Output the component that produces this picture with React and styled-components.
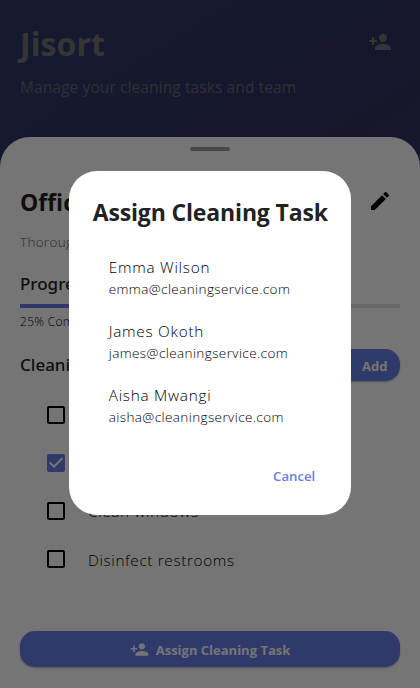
import React from "react";
import styled, { createGlobalStyle, css } from "styled-components";

const Global = createGlobalStyle`
  * { box-sizing: border-box; }
  body { margin: 0; overflow: hidden; font-family: "Open Sans", "Noto Sans", sans-serif; }
  h1, h2, h3, p, ul { margin: 0; padding: 0; }
  button { font: inherit; border: 0; margin: 0; padding: 0; background: none; }
`;

const Screen = styled.main`
  position: relative;
  height: 688px;
  width: 420px;
  overflow: hidden;
  display: flex;
  flex-direction: column;
  background: linear-gradient(rgba(0, 0, 0, 0.54), rgba(0, 0, 0, 0.54)),
    linear-gradient(148.6deg, #667eea 0%, #764ba2 100%);
`;
const Header = styled.header`
  height: 136.5px;
  flex: none;
  padding: 18px 28px 0 20px;
  color: #757575;
`;
const HeaderRow = styled.div`
  display: flex;
  height: 48px;
  align-items: center;
  justify-content: space-between;
`;
const Brand = styled.h1`
  font-size: 32px;
  line-height: 48px;
  padding-top: 3px;
  font-weight: 700;
  letter-spacing: 0.1px;
`;
const Tagline = styled.p`
  margin-top: 9px;
  font-size: 15.5px;
  line-height: 24px;
  letter-spacing: 0.1px;
  color: #69696c;
  white-space: nowrap;
`;
const Sheet = styled.section`
  flex: 1;
  display: flex;
  flex-direction: column;
  padding: 10px 20px 21px;
  border-radius: 30px 30px 0 0;
  background: #fff;
`;
const Handle = styled.div`
  width: 40px;
  height: 4px;
  border-radius: 2px;
  background: #9e9e9e;
  align-self: center;
  flex: none;
`;
const TitleRow = styled.div`
  display: flex;
  justify-content: space-between;
  align-items: center;
  height: 48px;
  margin-top: 26px;
  padding-right: 8px;
`;
const Title = styled.h2`
  font-size: 23px;
  line-height: 32px;
  padding-top: 2px;
  font-weight: 700;
  color: #222;
`;
const Description = styled.p`
  margin-top: 7.5px;
  font-size: 13.5px;
  line-height: 20px;
  font-weight: 300;
  letter-spacing: 0.3px;
  color: #606060;
`;
const Heading = styled.h3`
  font-family: "Noto Sans", sans-serif;
  font-size: 17px;
  line-height: 24px;
  font-weight: 500;
  color: #222;
`;
const ProgressHeading = styled(Heading)`
  margin-top: 20px;
`;
const Track = styled.div`
  height: 4px;
  margin-top: 7.5px;
  background: #e0e0e0;
  flex: none;
`;
const Fill = styled.div`
  height: 4px;
  background: #667eea;
`;
const ProgressText = styled.p`
  margin-top: 5px;
  font-size: 12px;
  line-height: 18px;
  letter-spacing: 0.3px;
  font-weight: 300;
  color: #000;
`;
const TasksRow = styled.div`
  margin-top: 17px;
  height: 34px;
  display: flex;
  justify-content: space-between;
  align-items: center;
`;
const filled = css`
  background: #667eea;
  color: #fff;
  font-weight: 700;
  font-size: 13px;
  box-shadow: 0 1px 2px rgba(0, 0, 0, 0.3);
`;
const AddButton = styled.button`
  ${filled}
  height: 32px;
  width: 92px;
  text-align: right;
  padding: 2px 12.5px 0 0;
  border-radius: 15px;
`;
const Tasks = styled.ul`
  list-style: none;
  margin-top: 9px;
  padding-left: 24px;
`;
const Task = styled.li`
  height: 48.2px;
  display: flex;
  align-items: center;
  gap: 20px;
  font-size: 15.3px;
  font-weight: 300;
  letter-spacing: 0.65px;
  color: #000;
`;
const TaskLabel = styled.span`
  padding-top: 1px;
`;
const AssignButton = styled.button`
  ${filled}
  height: 36px;
  flex: none;
  margin-top: auto;
  border-radius: 15px;
  display: flex;
  align-items: center;
  justify-content: center;
  gap: 7px;
`;
const ButtonLabel = styled.span`
  padding-top: 2px;
`;
const Barrier = styled.div`
  position: absolute;
  inset: 0;
  display: flex;
  align-items: center;
  justify-content: center;
  background: rgba(0, 0, 0, 0.54);
`;
const Dialog = styled.div`
  width: 282.6px;
  height: 344px;
  margin-bottom: 2px;
  border-radius: 28px;
  background: #fff;
  padding: 24px 24px;
  display: flex;
  flex-direction: column;
  flex: none;
`;
const DialogTitle = styled.h2`
  font-size: 23px;
  line-height: 34px;
  font-weight: 700;
  letter-spacing: -0.15px;
  color: #222;
  white-space: nowrap;
`;
const People = styled.div`
  margin-top: 14px;
  padding: 0 16px;
`;
const Person = styled.div`
  height: 64px;
  padding-top: 12.5px;
`;
const Name = styled.p`
  font-size: 15.3px;
  line-height: 23px;
  font-weight: 300;
  letter-spacing: 0.75px;
  color: #000;
`;
const Email = styled.p`
  font-size: 13.5px;
  line-height: 20px;
  font-weight: 300;
  letter-spacing: 0.4px;
  color: #000;
`;
const Cancel = styled.button`
  margin-top: auto;
  align-self: flex-end;
  height: 30px;
  padding-right: 12px;
  font-size: 13.2px;
  font-weight: 600;
  color: #667eea;
`;
const Icon = styled.svg`
  width: ${(p) => p.$size}px;
  height: ${(p) => p.$size}px;
  flex: none;
  fill: ${(p) => p.$color || "currentColor"};
`;

const paths = {
  personAdd:
    "M15 12c2.21 0 4-1.79 4-4s-1.79-4-4-4-4 1.79-4 4 1.79 4 4 4zm-9-2V7H4v3H1v2h3v3h2v-3h3v-2H6zm9 4c-2.67 0-8 1.34-8 4v2h16v-2c0-2.66-5.33-4-8-4z",
  edit: "M3 17.25V21h3.75L17.81 9.94l-3.75-3.75L3 17.25zM20.71 7.04c.39-.39.39-1.02 0-1.41l-2.34-2.34c-.39-.39-1.02-.39-1.41 0l-1.83 1.83 3.75 3.75 1.83-1.83z",
  box: "M19 5v14H5V5h14m0-2H5c-1.1 0-2 .9-2 2v14c0 1.1.9 2 2 2h14c1.1 0 2-.9 2-2V5c0-1.1-.9-2-2-2z",
  checked:
    "M19 3H5c-1.11 0-2 .9-2 2v14c0 1.1.89 2 2 2h14c1.11 0 2-.9 2-2V5c0-1.1-.89-2-2-2zm-9 14l-5-5 1.41-1.41L10 14.17l7.59-7.59L19 8l-9 9z",
};
const Glyph = ({ name, size = 24, color }) => (
  <Icon viewBox="0 0 24 24" $size={size} $color={color} aria-hidden="true">
    <path d={paths[name]} />
  </Icon>
);

const tasks = [
  { id: 1 },
  { id: 2, done: true },
  { id: 3, label: "Clean windows" },
  { id: 4, label: "Disinfect restrooms" },
];
const people = [
  ["Emma Wilson", "emma@cleaningservice.com"],
  ["James Okoth", "james@cleaningservice.com"],
  ["Aisha Mwangi", "aisha@cleaningservice.com"],
];

export default function App() {
  return (
    <Screen>
      <Global />
      <Header>
        <HeaderRow>
          <Brand>Jisort</Brand>
          <Glyph name="personAdd" />
        </HeaderRow>
        <Tagline>Manage your cleaning tasks and team</Tagline>
      </Header>
      <Sheet>
        <Handle />
        <TitleRow>
          <Title>Office</Title>
          <Glyph name="edit" color="#000" />
        </TitleRow>
        <Description>Thorough</Description>
        <ProgressHeading>Progress</ProgressHeading>
        <Track>
          <Fill style={{ width: "25%" }} />
        </Track>
        <ProgressText>25% Complete</ProgressText>
        <TasksRow>
          <Heading>Cleaning</Heading>
          <AddButton>Add</AddButton>
        </TasksRow>
        <Tasks>
          {tasks.map((t) => (
            <Task key={t.id}>
              <Glyph name={t.done ? "checked" : "box"} color={t.done ? "#667eea" : "#000"} />
              {t.label && <TaskLabel>{t.label}</TaskLabel>}
            </Task>
          ))}
        </Tasks>
        <AssignButton>
          <Glyph name="personAdd" size={19} />
          <ButtonLabel>Assign Cleaning Task</ButtonLabel>
        </AssignButton>
      </Sheet>
      <Barrier>
        <Dialog role="dialog">
          <DialogTitle>Assign Cleaning Task</DialogTitle>
          <People>
            {people.map(([name, email]) => (
              <Person key={email}>
                <Name>{name}</Name>
                <Email>{email}</Email>
              </Person>
            ))}
          </People>
          <Cancel>Cancel</Cancel>
        </Dialog>
      </Barrier>
    </Screen>
  );
}
